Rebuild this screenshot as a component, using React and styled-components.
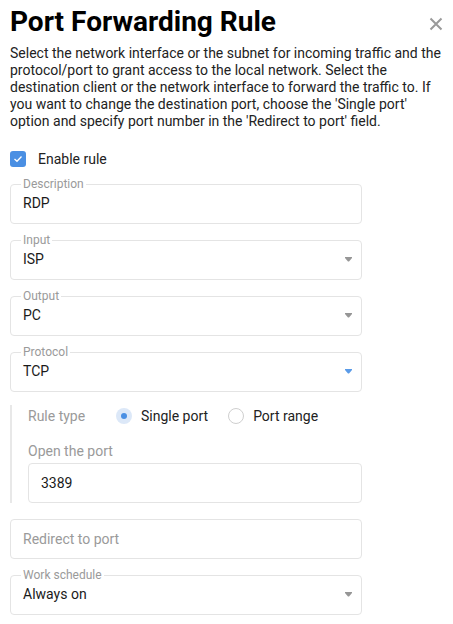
import React from 'react';
import styled, { createGlobalStyle } from 'styled-components';

const GlobalStyle = createGlobalStyle`
    body {
        margin: 0;
        background: #fff;
        font-family: Roboto, "Liberation Sans", sans-serif;
        color: #222;
    }
`;

const Page = styled.div`
    width: 453px;
    padding: 4px 10px 0 10px;
    box-sizing: border-box;
`;

const Header = styled.div`
    display: flex;
    justify-content: space-between;
    align-items: center;
`;

const Title = styled.h1`
    margin: 0;
    font-size: 28px;
    line-height: 36px;
    font-weight: 700;
    color: #000;
`;

const CloseButton = styled.button`
    border: none;
    background: none;
    padding: 0;
    margin-top: 4px;
    width: 14px;
    height: 14px;
    display: flex;
    cursor: pointer;
`;

const Intro = styled.p`
    margin: 5px 0 0 0;
    font-size: 14px;
    line-height: 17px;
    color: #222;
`;

const Form = styled.div`
    width: 352px;
    margin-top: 21px;
    display: flex;
    flex-direction: column;
`;

const CheckRow = styled.label`
    display: flex;
    align-items: center;
    gap: 12px;
    font-size: 14px;
    color: #222;
    height: 16px;
    margin-bottom: 10px;
`;

const CheckBox = styled.span`
    width: 16px;
    height: 16px;
    border-radius: 3px;
    background: #4a8fe3;
    display: flex;
    align-items: center;
    justify-content: center;
`;

const Field = styled.fieldset`
    margin: 0 0 9px 0;
    padding: 2px 9px 10px 12px;
    border: 1px solid #e4e4e4;
    border-radius: 4px;
    display: flex;
    align-items: center;
    justify-content: space-between;
    min-width: 0;
`;

const Legend = styled.legend`
    font-size: 12px;
    line-height: 14px;
    color: #9a9a9a;
    padding: 0 2px;
    margin-left: -2px;
`;

const Value = styled.span`
    font-size: 14px;
    line-height: 20px;
    color: #1a1a1a;
`;

const RuleBlock = styled.div`
    border-left: 2px solid #e8e8e8;
    margin-top: 4px;
    padding: 3px 0 0 16px;
    display: flex;
    flex-direction: column;
`;

const RadioRow = styled.div`
    display: flex;
    align-items: center;
    height: 16px;
    font-size: 14px;
    color: #222;
`;

const RadioLabel = styled.span`
    color: #9a9a9a;
    width: 88px;
`;

const RadioOption = styled.label`
    display: flex;
    align-items: center;
    gap: 9px;
    margin-right: 20px;
`;

const RadioCircle = styled.span`
    width: 16px;
    height: 16px;
    box-sizing: border-box;
    border-radius: 50%;
    display: flex;
    align-items: center;
    justify-content: center;
    background: ${p => (p.checked ? '#dce8f8' : '#fff')};
    border: ${p => (p.checked ? 'none' : '1px solid #cfcfcf')};

    &::after {
        content: '';
        display: ${p => (p.checked ? 'block' : 'none')};
        width: 6px;
        height: 6px;
        border-radius: 50%;
        background: #4a8fe3;
    }
`;

const SubLabel = styled.div`
    font-size: 14px;
    line-height: 20px;
    color: #9a9a9a;
    margin-top: 17px;
    margin-bottom: 2px;
`;

const TextBox = styled.div`
    height: 40px;
    box-sizing: border-box;
    border: 1px solid #e4e4e4;
    border-radius: 4px;
    padding: 0 12px;
    display: flex;
    align-items: center;
    font-size: 14px;
    color: ${p => (p.placeholder ? '#9a9a9a' : '#1a1a1a')};
    margin-top: ${p => p.top || 0}px;
    margin-bottom: ${p => p.bottom || 0}px;
`;

const DropArrow = ({ active }) => (
    <svg width="7" height="5" viewBox="0 0 7 5">
        <path d="M0 0 H7 V1 L4 4.5 H3 L0 1 Z" fill={active ? '#5a9be8' : '#969696'} />
    </svg>
);

const SelectField = ({ label, value, active }) => (
    <Field>
        <Legend>{label}</Legend>
        <Value>{value}</Value>
        <DropArrow active={active} />
    </Field>
);

const App = () => {
    return (
        <Page>
            <GlobalStyle />
            <Header>
                <Title>Port Forwarding Rule</Title>
                <CloseButton aria-label="Close">
                    <svg width="14" height="14" viewBox="0 0 14 14">
                        <path d="M1.5 1.5 L12.5 12.5 M12.5 1.5 L1.5 12.5" stroke="#9a9a9a" strokeWidth="2" />
                    </svg>
                </CloseButton>
            </Header>
            <Intro>
                Select the network interface or the subnet for incoming traffic and the protocol/port to grant access to the local network. Select the destination client or the network interface to forward the traffic to. If you want to change the destination port, choose the 'Single port' option and specify port number in the 'Redirect to port' field.
            </Intro>
            <Form>
                <CheckRow>
                    <CheckBox>
                        <svg width="10" height="8" viewBox="0 0 10 8">
                            <path d="M1.5 4 L4 6.3 L8.5 1.5" stroke="#fff" strokeWidth="1.3" fill="none" />
                        </svg>
                    </CheckBox>
                    Enable rule
                </CheckRow>
                <Field>
                    <Legend>Description</Legend>
                    <Value>RDP</Value>
                </Field>
                <SelectField label="Input" value="ISP" />
                <SelectField label="Output" value="PC" />
                <SelectField label="Protocol" value="TCP" active />
                <RuleBlock>
                    <RadioRow>
                        <RadioLabel>Rule type</RadioLabel>
                        <RadioOption>
                            <RadioCircle checked />
                            Single port
                        </RadioOption>
                        <RadioOption>
                            <RadioCircle />
                            Port range
                        </RadioOption>
                    </RadioRow>
                    <SubLabel>Open the port</SubLabel>
                    <TextBox>3389</TextBox>
                </RuleBlock>
                <TextBox placeholder top={16} bottom={9}>Redirect to port</TextBox>
                <SelectField label="Work schedule" value="Always on" />
            </Form>
        </Page>
    );
};

export default App;
